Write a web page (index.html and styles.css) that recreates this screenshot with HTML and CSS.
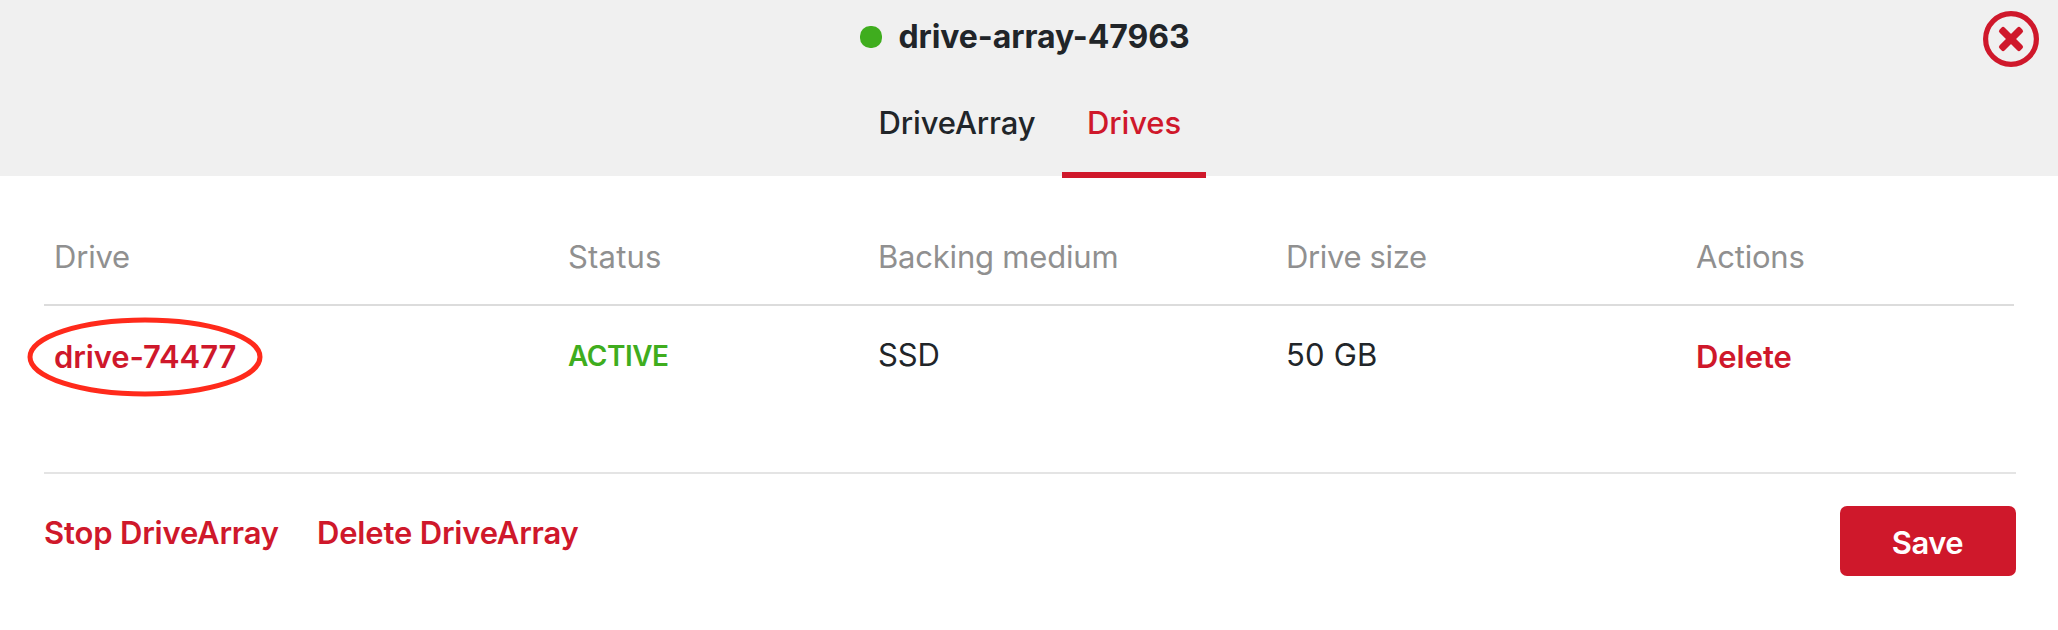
FILE: index.html
```html
<!DOCTYPE html>
<html lang="en">
<head>
<meta charset="utf-8">
<title>drive-array-47963</title>
<link rel="stylesheet" href="styles.css">
</head>
<body>
<header class="header">
  <div class="title-row">
    <span class="status-dot"></span>
    <h1 class="title">drive-array-47963</h1>
  </div>
  <nav class="tabs">
    <a class="tab tab-first">DriveArray</a>
    <a class="tab tab-active">Drives</a>
  </nav>
  <button class="close" aria-label="Close">
    <svg width="56" height="56" viewBox="0 0 56 56" fill="none">
      <circle cx="28" cy="28" r="25.4" stroke="currentColor" stroke-width="5.2"/>
      <g fill="currentColor">
        <rect x="13.2" y="24.4" width="29.6" height="7.2" rx="2.4" transform="rotate(45 28 28)"/>
        <rect x="13.2" y="24.4" width="29.6" height="7.2" rx="2.4" transform="rotate(-45 28 28)"/>
      </g>
    </svg>
  </button>
</header>
<main class="content">
  <div class="row row-head">
    <span>Drive</span>
    <span class="status-head">Status</span>
    <span>Backing medium</span>
    <span class="size-head">Drive size</span>
    <span>Actions</span>
  </div>
  <div class="row row-body">
    <span class="link drive">drive-74477
      <svg class="marker" width="236" height="80" viewBox="0 0 236 80" fill="none">
        <ellipse cx="118" cy="40" rx="115" ry="37" stroke="#ff2a1b" stroke-width="5"/>
      </svg>
    </span>
    <span class="active">ACTIVE</span>
    <span class="medium">SSD</span>
    <span class="size">50 GB</span>
    <span class="link delete">Delete</span>
  </div>
  <footer class="footer">
    <a class="action stop">Stop DriveArray</a>
    <a class="action">Delete DriveArray</a>
    <button class="save">Save</button>
  </footer>
</main>
</body>
</html>
```
FILE: styles.css
```css
* { box-sizing: border-box; }

body {
  margin: 0;
  background: #fff;
  color: #212529;
  font: 400 31px/46px Inter, "Liberation Sans", sans-serif;
  white-space: nowrap;
}

button {
  border: 0;
  padding: 0;
  background: none;
  font: inherit;
}

.header {
  position: relative;
  height: 176px;
  padding-top: 13px;
  background: #f0f0f0;
}

.title-row {
  display: flex;
  align-items: center;
  justify-content: center;
  gap: 16px;
  height: 48px;
  padding-right: 8px;
}

.status-dot {
  width: 22px;
  height: 22px;
  border-radius: 10px;
  background: #3fad1e;
}

.title {
  margin: 0;
  font-size: 32px;
  line-height: 48px;
  font-weight: 700;
  letter-spacing: -0.07px;
}

.tabs {
  display: flex;
  justify-content: center;
  margin-top: 39px;
}

.tab {
  width: 144px;
  padding-bottom: 26px;
  border-bottom: 6px solid transparent;
  text-align: center;
  font-weight: 500;
  letter-spacing: -0.1px;
}

.tab-first { width: 210px; }

.tab-active {
  color: #cf182b;
  border-color: #cf182b;
}

.close {
  position: absolute;
  top: 11px;
  right: 19px;
  width: 56px;
  height: 56px;
  color: #cf182b;
}

.close svg { display: block; }

.content { padding: 58px 42px 0 44px; }

.row {
  display: grid;
  grid-template-columns: 514px 310px 408px 410px 328px;
  width: 1970px;
}

.row > span { padding-left: 10px; }

.row-head {
  padding-bottom: 24px;
  border-bottom: 2px solid #dcdcdc;
  color: #909090;
  letter-spacing: -0.2px;
}

.row-head .status-head { letter-spacing: 0.19px; }

.row-head .size-head { letter-spacing: -0.35px; }

.row-body {
  height: 166px;
  padding-top: 26px;
}

.row-body .link {
  padding-top: 2px;
  color: #cf182b;
  font-weight: 600;
}

.drive {
  position: relative;
  letter-spacing: -0.09px;
}

.marker {
  position: absolute;
  left: -17px;
  top: -15px;
}

.row-body .active {
  padding-top: 1px;
  color: #3fad1e;
  font-size: 28px;
  font-weight: 600;
  letter-spacing: -0.5px;
}

.medium { letter-spacing: -0.1px; }

.size { letter-spacing: 0.19px; }

.delete { letter-spacing: -0.06px; }

.footer {
  display: flex;
  align-items: flex-start;
  padding-top: 32px;
  border-top: 2px solid #e4e4e4;
}

.action {
  padding-top: 4px;
  color: #cf182b;
  font-weight: 600;
  letter-spacing: -0.18px;
}

.stop { width: 273px; }

.save {
  width: 176px;
  height: 70px;
  margin-left: auto;
  padding: 4px 1px 0 0;
  border-radius: 7px;
  background: #cf182b;
  color: #fff;
  font-weight: 600;
  letter-spacing: -0.5px;
}
```
